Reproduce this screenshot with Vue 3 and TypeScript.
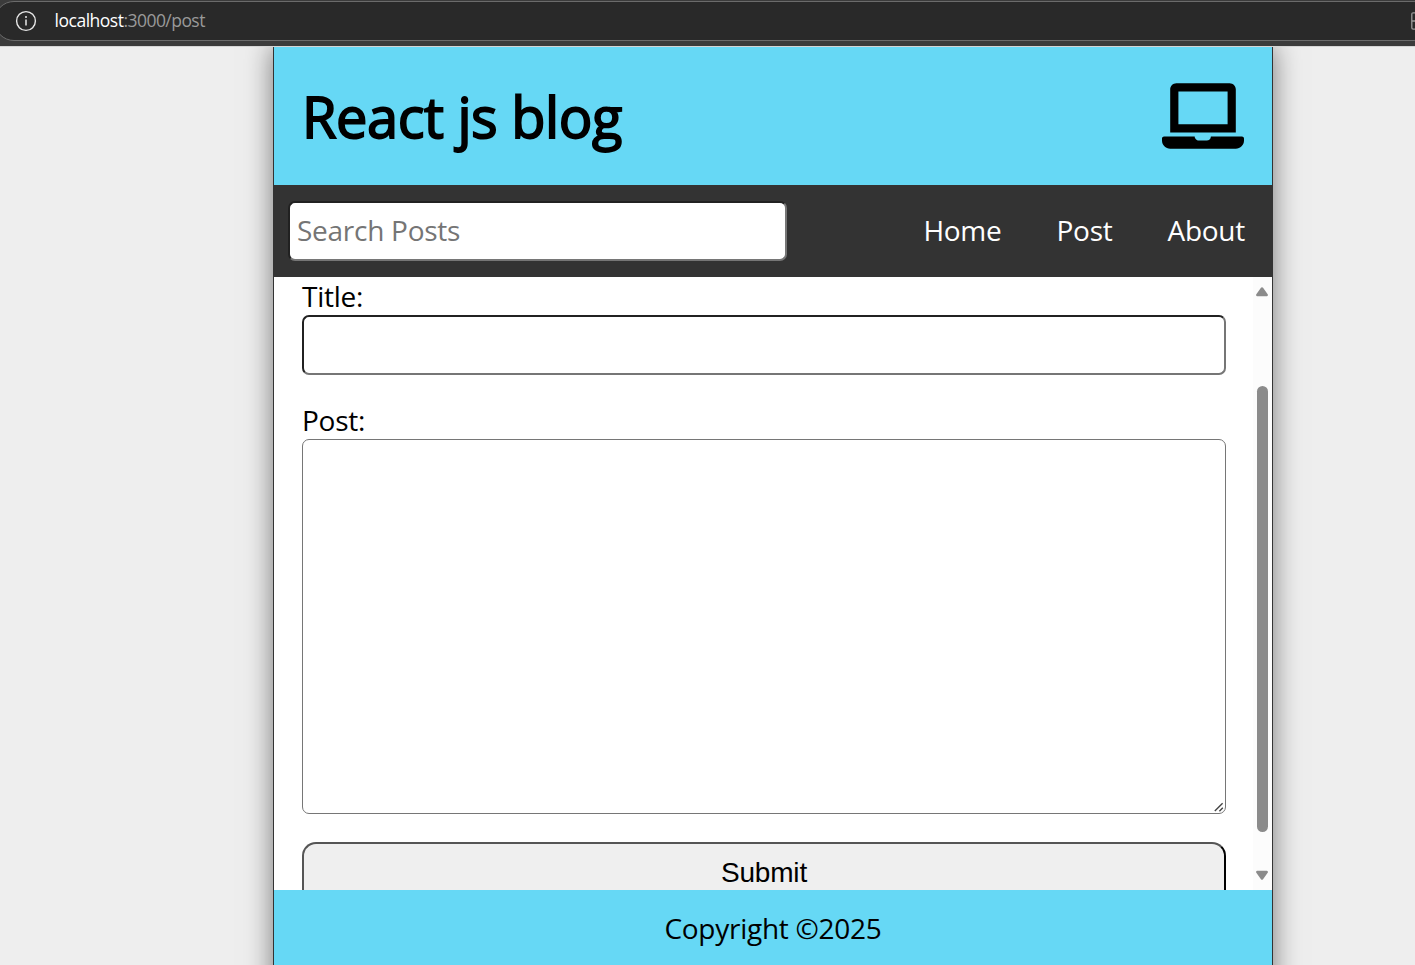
<script setup lang="ts">
import { ref } from 'vue'

const search = ref('')
const postTitle = ref('')
const postBody = ref('')
const links: string[] = ['Home', 'Post', 'About']
</script>

<template>
  <div class="window">
    <div class="chrome">
      <div class="address">
        <svg class="info" viewBox="0 0 22 22" fill="none" stroke="#e8e8e8">
          <circle cx="11" cy="11" r="9.4" stroke-width="1.4" />
          <path d="M11 9.6V15.4" stroke-width="1.5" />
          <circle cx="11" cy="6.9" r="1" fill="#e8e8e8" stroke="none" />
        </svg>
        <span class="host">localhost</span><span class="path">:3000/post</span>
        <svg class="edge-icon" viewBox="0 0 4 18" fill="none" stroke="#999" stroke-width="1.3">
          <path d="M5 .8H2.2Q.8 .8 .8 2.2V15.8Q.8 17.2 2.2 17.2H5M.8 9H5" />
        </svg>
      </div>
    </div>
    <div class="page">
      <div class="app">
        <header class="header">
          <h1>React js blog</h1>
          <svg class="laptop" viewBox="0 0 640 512" fill="#000">
            <path d="M624 416H381.54c-.74 19.81-14.71 32-32.74 32H288c-18.69 0-33.02-17.47-32.77-32H16c-8.8 0-16 7.2-16 16v16c0 35.2 28.8 64 64 64h512c35.2 0 64-28.8 64-64v-16c0-8.8-7.2-16-16-16zM576 48c0-26.4-21.6-48-48-48H112C85.6 0 64 21.6 64 48v336h512V48zm-64 272H128V64h384v256z" />
          </svg>
        </header>
        <nav class="nav">
          <input v-model="search" class="field search" type="text" placeholder="Search Posts" />
          <ul>
            <li v-for="link in links" :key="link">{{ link }}</li>
          </ul>
        </nav>
        <main class="main">
          <form class="form" @submit.prevent>
            <label for="title">Title:</label>
            <input id="title" v-model="postTitle" class="field title" type="text" />
            <label for="body">Post:</label>
            <div class="area">
              <textarea id="body" v-model="postBody"></textarea>
              <svg class="grip" viewBox="0 0 10 10" stroke="#444" stroke-width="1.4" fill="none">
                <path d="M.8 9L8.6 1.2M5.4 9.2L8.8 5.8" />
              </svg>
            </div>
            <button type="submit">Submit</button>
          </form>
          <div class="scrollbar">
            <svg viewBox="0 0 14 10"><path d="M7 1.6L11.6 8H2.4Z" /></svg>
            <div class="thumb"></div>
            <svg class="down" viewBox="0 0 14 10"><path d="M7 8.4L11.6 2H2.4Z" /></svg>
          </div>
        </main>
        <footer class="footer">Copyright ©2025</footer>
      </div>
    </div>
  </div>
</template>

<style>
body {
  margin: 0;
  overflow: hidden;
}
</style>

<style scoped>
* {
  box-sizing: border-box;
}
.window {
  width: 1415px;
  height: 965px;
  overflow: hidden;
  display: flex;
  flex-direction: column;
  font-family: 'Open Sans', sans-serif;
  font-size: 28px;
  line-height: 38px;
  letter-spacing: -0.26px;
  color: #000;
}
.chrome {
  height: 46px;
  flex: none;
  background: #3b3b3b;
  padding-top: 1px;
}
.address {
  width: 1440px;
  height: 40px;
  margin-left: -6px;
  border: 1px solid #6b6b6b;
  border-radius: 20px;
  background: #292929;
  display: flex;
  align-items: center;
  font-size: 17.5px;
  line-height: 36px;
}
.info {
  width: 22px;
  height: 22px;
  margin: 0 18px 0 19.5px;
}
.host {
  padding-bottom: 2px;
  color: #fff;
  letter-spacing: -0.48px;
}
.path {
  padding-bottom: 2px;
  color: #999;
  letter-spacing: -0.55px;
}
.edge-icon {
  width: 4px;
  height: 18px;
  margin: 0 18px 0 auto;
}
.page {
  flex: 1;
  min-height: 0;
  overflow: hidden;
  background: #eee;
  border-top: 1px solid #d5d5d5;
  padding-left: 273px;
}
.app {
  width: 1000px;
  height: 980px;
  margin-top: -1px;
  border: 1px solid #333;
  background: #fff;
  box-shadow: 0 0 26px rgba(0, 0, 0, 0.5);
}
.header {
  height: 138px;
  padding: 0 28px;
  background: #66d8f5;
  display: flex;
  align-items: center;
  justify-content: space-between;
}
h1 {
  margin: 0;
  font-size: 56px;
  font-weight: 400;
  line-height: 76px;
  letter-spacing: -0.5px;
  -webkit-text-stroke: 1.8px #000;
}
.laptop {
  width: 82px;
  height: 66px;
}
.nav {
  height: 92px;
  padding: 0 27px 0 14px;
  background: #333;
  display: flex;
  align-items: center;
  justify-content: space-between;
}
.field {
  display: block;
  height: 60px;
  padding: 0 7px 2px;
  border: 2px solid;
  border-color: #212121 #767676 #767676 #212121;
  border-radius: 7px;
  background: #fff;
  font: inherit;
  letter-spacing: inherit;
  outline: none;
}
.search {
  width: 499px;
}
.search::placeholder {
  color: #757575;
  opacity: 1;
}
ul {
  display: flex;
  gap: 55px;
  margin: 0 0 2px;
  padding: 0;
  list-style: none;
  color: #fff;
}
.main {
  height: 613px;
  overflow: hidden;
  display: flex;
  justify-content: space-between;
}
.form {
  width: 952px;
  padding-left: 28px;
  display: flex;
  flex-direction: column;
}
label {
  height: 38px;
  flex: none;
  line-height: 38px;
}
.title {
  width: 100%;
  flex: none;
  margin-bottom: 26px;
}
.area {
  position: relative;
  height: 375px;
  flex: none;
  margin-bottom: 28px;
}
textarea {
  display: block;
  width: 100%;
  height: 100%;
  padding: 7px;
  border: 1px solid #767676;
  border-radius: 7px;
  background: #fff;
  font: inherit;
  resize: none;
  outline: none;
}
.grip {
  position: absolute;
  right: 2px;
  bottom: 2px;
  width: 10px;
  height: 10px;
}
button {
  height: 84px;
  flex: none;
  margin: 0;
  padding: 0 0 22px;
  border: 2px solid;
  border-color: #555 #000 #000 #555;
  border-radius: 14px;
  background: #efefef;
  color: #000;
  font: 28px 'Liberation Sans', Arial, sans-serif;
  letter-spacing: -0.2px;
}
.scrollbar {
  width: 19px;
  background: #fcfcfc;
  display: flex;
  flex-direction: column;
  align-items: flex-start;
  padding: 10px 0 10px 2px;
}
.scrollbar svg {
  width: 14px;
  height: 10px;
  flex: none;
  fill: #8b8b8b;
  stroke: #8b8b8b;
  stroke-width: 2.6;
  stroke-linejoin: round;
}
.thumb {
  width: 11px;
  height: 446px;
  margin: 89px 0 0 2px;
  border-radius: 6px;
  background: #8b8b8b;
}
.down {
  margin-top: auto;
}
.footer {
  height: 200px;
  padding-top: 19px;
  background: #66d8f5;
  text-align: center;
}
</style>
